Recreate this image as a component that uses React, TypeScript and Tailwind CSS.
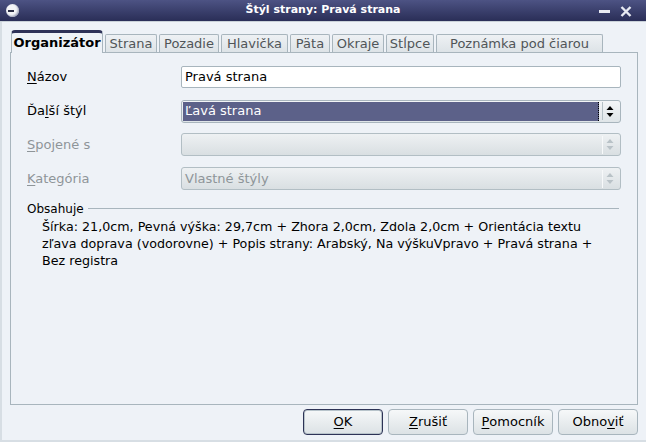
import React from "react";

const tabs = [
  { t: "Strana", w: 52 },
  { t: "Pozadie", w: 60 },
  { t: "Hlavička", w: 67 },
  { t: "Päta", w: 40 },
  { t: "Okraje", w: 52 },
  { t: "Stĺpce", w: 48 },
  { t: "Poznámka pod čiarou", w: 167 },
];

function Spin({ disabled }: { disabled?: boolean }) {
  const c = disabled ? "#b9c2c7" : "#000000";
  return (
    <svg width="8" height="13" viewBox="0 0 8 13">
      <path d="M4 1 L7.5 5 L0.5 5 Z" fill={c} />
      <path d="M0.5 8 L7.5 8 L4 12 Z" fill={c} />
    </svg>
  );
}

function Label({ u, rest, disabled }: { u: string; rest: string; disabled?: boolean }) {
  return (
    <div className={`w-[154px] ${disabled ? "text-[#8e9599]" : "text-black"}`}>
      <span className="underline underline-offset-2">{u}</span>
      {rest}
    </div>
  );
}

export default function App() {
  return (
    <div
      className="w-[646px] h-[442px] bg-[#eef2f7] flex flex-col overflow-hidden text-[13px] text-black"
      style={{ fontFamily: '"DejaVu Sans", "Liberation Sans", sans-serif' }}
    >
      {/* title bar */}
      <div className="h-[21px] bg-gradient-to-b from-[#4d5384] to-[#2a2e57] flex items-center relative shrink-0">
        <div className="absolute left-[6px] top-[4px] w-[13px] h-[13px] rounded-full bg-[#f4f5f8] shadow-[inset_-1px_-1px_2px_#9aa0b8]">
          <div className="absolute left-[2px] top-[6px] w-[6px] h-[2px] bg-[#2b2e45]" />
        </div>
        <div className="flex-1 text-center text-white font-bold text-[11px]">Štýl strany: Pravá strana</div>
        <div className="absolute left-[599px] top-[10px] w-[11px] h-[3px] bg-[#e8eaf2]" />
        <svg className="absolute left-[620px] top-[6px]" width="12" height="11" viewBox="0 0 12 11">
          <path d="M1.5 1 L10.5 10 M10.5 1 L1.5 10" stroke="#e8eaf2" strokeWidth="2.4" />
        </svg>
      </div>
      <div className="h-px bg-[#c9d1d8] shrink-0" />

      <div className="flex-1 flex flex-col pl-[8px] pr-[8px] border-l-2 border-[#d7dee4] border-b-2">
        {/* tabs */}
        <div className="flex items-end pl-[1px] mt-[7px] gap-[2px] h-[23px] relative z-10">
          <div className="w-[92px] h-[23px] bg-[#eef2f7] border-x border-[#a8b5bd] rounded-t-[4px] border-t-[3px] border-t-[#2e3258] flex items-center justify-center font-bold -mb-px">
            Organizátor
          </div>
          {tabs.map((t) => (
            <div
              key={t.t}
              style={{ width: t.w }}
              className="h-[18px] bg-gradient-to-b from-[#eef1f4] to-[#dde3e7] border border-b-0 border-[#a8b5bd] rounded-t-[2px] flex items-center justify-center text-[#505558]"
            >
              {t.t}
            </div>
          ))}
        </div>

        {/* panel */}
        <div className="h-[353px] border border-[#a8b5bd] bg-[#eef2f7] pl-[16px] pr-[16px] pt-[13px] flex flex-col">
          <div className="flex items-center h-[22px]">
            <Label u="N" rest="ázov" />
            <div className="flex-1 h-[22px] bg-white border border-[#a8b5bd] rounded-[2px] flex items-center pl-[3px]">
              Pravá strana
            </div>
          </div>

          <div className="flex items-center h-[22px] mt-[12px]">
            <div className="w-[154px]">
              Ďa<span className="underline underline-offset-2">l</span>ší štýl
            </div>
            <div className="flex-1 h-[23px] border border-[#a8b5bd] rounded-[3px] bg-gradient-to-b from-[#f3f5f7] to-[#dfe5e8] flex items-stretch p-[1px]">
              <div className="flex-1 bg-[#5c6189] text-white flex items-center pl-[2px] border-r border-dotted border-black">
                Ľavá strana
              </div>
              <div className="w-[20px] flex items-center pl-[3px] gap-[3px]">
                <div className="w-px h-[18px] bg-[#b5c0c6]" />
                <Spin />
              </div>
            </div>
          </div>

          <div className="flex items-center h-[23px] mt-[11px]">
            <Label u="S" rest="pojené s" disabled />
            <div className="flex-1 h-[23px] border border-[#b2bec4] rounded-[3px] bg-gradient-to-b from-[#eef1f3] to-[#d9dfe2] flex items-center justify-end">
              <div className="w-[18px] flex items-center gap-[3px]">
                <div className="w-px h-[18px] bg-[#f7f9fa]" />
                <Spin disabled />
              </div>
            </div>
          </div>

          <div className="flex items-center h-[23px] mt-[11px]">
            <Label u="K" rest="ategória" disabled />
            <div className="flex-1 h-[23px] border border-[#b2bec4] rounded-[3px] bg-gradient-to-b from-[#eef1f3] to-[#d9dfe2] flex items-center justify-between pl-[3px] text-[#8e9599]">
              <span>Vlastné štýly</span>
              <div className="w-[18px] flex items-center gap-[3px]">
                <div className="w-px h-[18px] bg-[#f7f9fa]" />
                <Spin disabled />
              </div>
            </div>
          </div>

          <div className="flex items-center mt-[10px] h-[17px] text-[12px]">
            <span>Obsahuje</span>
            <div className="flex-1 h-px bg-[#a8b5bd] ml-[4px] mr-[2px]" />
          </div>
          <div className="mt-[1px] ml-[15px] w-[565px] leading-[17px] text-[12.7px]">
            Šírka: 21,0cm, Pevná výška: 29,7cm + Zhora 2,0cm, Zdola 2,0cm + Orientácia textu zľava doprava (vodorovne) + Popis strany: Arabský, Na výškuVpravo + Pravá strana + Bez registra
          </div>
        </div>

        {/* buttons */}
        <div className="flex justify-end gap-[5px] mt-[4px] pr-0">
          {[
            { a: "", u: "O", b: "K", def: true },
            { a: "", u: "Z", b: "rušiť" },
            { a: "", u: "P", b: "omocník" },
            { a: "Obno", u: "v", b: "iť" },
          ].map((x, i) => (
            <div
              key={i}
              className={`w-[80px] h-[26px] rounded-[4px] flex items-center justify-center bg-gradient-to-b from-[#f6f8f9] to-[#dce2e5] ${
                x.def ? "border border-[#2d3356] shadow-[inset_0_0_0_1px_#b8c4cb]" : "border border-[#a8b5bd]"
              }`}
            >
              {x.a}
              <span className="underline underline-offset-2">{x.u}</span>
              {x.b}
            </div>
          ))}
        </div>
      </div>
    </div>
  );
}
